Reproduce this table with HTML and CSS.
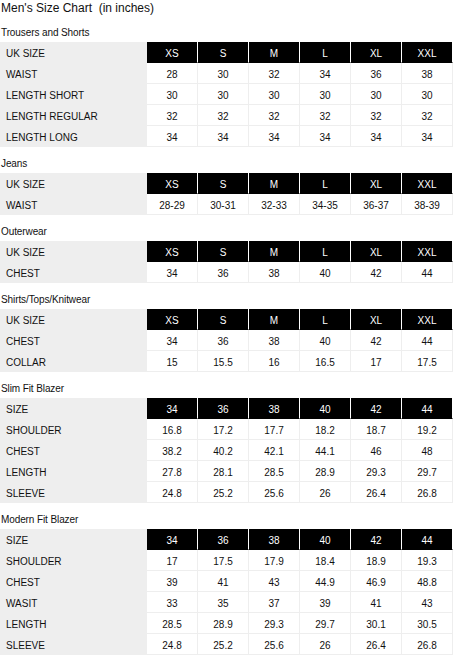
FILE: index.html
```html
<html>
    <head>
        <link rel="stylesheet" href="styles.css">
    </head>

    <body>
        <h1 class="page-title">Men's Size Chart&nbsp; (in inches)</h1>

        <h2 class="chart-title">Trousers and Shorts</h2>
        <table class="size-table">
            <tr class="head"><td class="label">UK SIZE</td><td>XS</td><td>S</td><td>M</td><td>L</td><td>XL</td><td>XXL</td></tr>
            <tr><td class="label">WAIST</td><td>28</td><td>30</td><td>32</td><td>34</td><td>36</td><td>38</td></tr>
            <tr><td class="label">LENGTH SHORT</td><td>30</td><td>30</td><td>30</td><td>30</td><td>30</td><td>30</td></tr>
            <tr><td class="label">LENGTH REGULAR</td><td>32</td><td>32</td><td>32</td><td>32</td><td>32</td><td>32</td></tr>
            <tr><td class="label">LENGTH LONG</td><td>34</td><td>34</td><td>34</td><td>34</td><td>34</td><td>34</td></tr>
        </table>

        <h2 class="chart-title">Jeans</h2>
        <table class="size-table">
            <tr class="head"><td class="label">UK SIZE</td><td>XS</td><td>S</td><td>M</td><td>L</td><td>XL</td><td>XXL</td></tr>
            <tr><td class="label">WAIST</td><td>28-29</td><td>30-31</td><td>32-33</td><td>34-35</td><td>36-37</td><td>38-39</td></tr>
        </table>

        <h2 class="chart-title">Outerwear</h2>
        <table class="size-table">
            <tr class="head"><td class="label">UK SIZE</td><td>XS</td><td>S</td><td>M</td><td>L</td><td>XL</td><td>XXL</td></tr>
            <tr><td class="label">CHEST</td><td>34</td><td>36</td><td>38</td><td>40</td><td>42</td><td>44</td></tr>
        </table>

        <h2 class="chart-title">Shirts/Tops/Knitwear</h2>
        <table class="size-table">
            <tr class="head"><td class="label">UK SIZE</td><td>XS</td><td>S</td><td>M</td><td>L</td><td>XL</td><td>XXL</td></tr>
            <tr><td class="label">CHEST</td><td>34</td><td>36</td><td>38</td><td>40</td><td>42</td><td>44</td></tr>
            <tr><td class="label">COLLAR</td><td>15</td><td>15.5</td><td>16</td><td>16.5</td><td>17</td><td>17.5</td></tr>
        </table>

        <h2 class="chart-title">Slim Fit Blazer</h2>
        <table class="size-table">
            <tr class="head"><td class="label">SIZE</td><td>34</td><td>36</td><td>38</td><td>40</td><td>42</td><td>44</td></tr>
            <tr><td class="label">SHOULDER</td><td>16.8</td><td>17.2</td><td>17.7</td><td>18.2</td><td>18.7</td><td>19.2</td></tr>
            <tr><td class="label">CHEST</td><td>38.2</td><td>40.2</td><td>42.1</td><td>44.1</td><td>46</td><td>48</td></tr>
            <tr><td class="label">LENGTH</td><td>27.8</td><td>28.1</td><td>28.5</td><td>28.9</td><td>29.3</td><td>29.7</td></tr>
            <tr><td class="label">SLEEVE</td><td>24.8</td><td>25.2</td><td>25.6</td><td>26</td><td>26.4</td><td>26.8</td></tr>
        </table>

        <h2 class="chart-title">Modern Fit Blazer</h2>
        <table class="size-table">
            <tr class="head"><td class="label">SIZE</td><td>34</td><td>36</td><td>38</td><td>40</td><td>42</td><td>44</td></tr>
            <tr><td class="label">SHOULDER</td><td>17</td><td>17.5</td><td>17.9</td><td>18.4</td><td>18.9</td><td>19.3</td></tr>
            <tr><td class="label">CHEST</td><td>39</td><td>41</td><td>43</td><td>44.9</td><td>46.9</td><td>48.8</td></tr>
            <tr><td class="label">WASIT</td><td>33</td><td>35</td><td>37</td><td>39</td><td>41</td><td>43</td></tr>
            <tr><td class="label">LENGTH</td><td>28.5</td><td>28.9</td><td>29.3</td><td>29.7</td><td>30.1</td><td>30.5</td></tr>
            <tr><td class="label">SLEEVE</td><td>24.8</td><td>25.2</td><td>25.6</td><td>26</td><td>26.4</td><td>26.8</td></tr>
        </table>
    </body>
</html>
```

FILE: styles.css
```css
body {
    margin: 0;
    font-family: "Liberation Sans", Arial, sans-serif;
    color: #111;
    background-color: white;
}

.page-title {
    margin: 0;
    padding-left: 1px;
    font-size: 12px;
    font-weight: normal;
    line-height: 16px;
    height: 16px;
}

.chart-title {
    margin: 0;
    padding: 11px 0 3px 1px;
    font-size: 10px;
    font-weight: normal;
    line-height: 12px;
    letter-spacing: -0.1px;
}

.size-table {
    width: 453px;
    table-layout: fixed;
    border-collapse: separate;
    border-spacing: 0;
}

.size-table td {
    box-sizing: border-box;
    height: 21px;
    padding: 3px 0 0 0;
    font-size: 10px;
    line-height: 17px;
    text-align: center;
    border-right: 1px solid #eee;
    border-bottom: 1px solid #eee;
    white-space: nowrap;
}

.size-table .label {
    width: 147px;
    padding-left: 6px;
    text-align: left;
    background-color: #eee;
    border-right: none;
}

.size-table .head td {
    background-color: black;
    color: white;
    border-right-color: white;
    border-bottom-color: black;
}

.size-table .head .label {
    background-color: #eee;
    color: #111;
    border-bottom-color: #eee;
}
```
